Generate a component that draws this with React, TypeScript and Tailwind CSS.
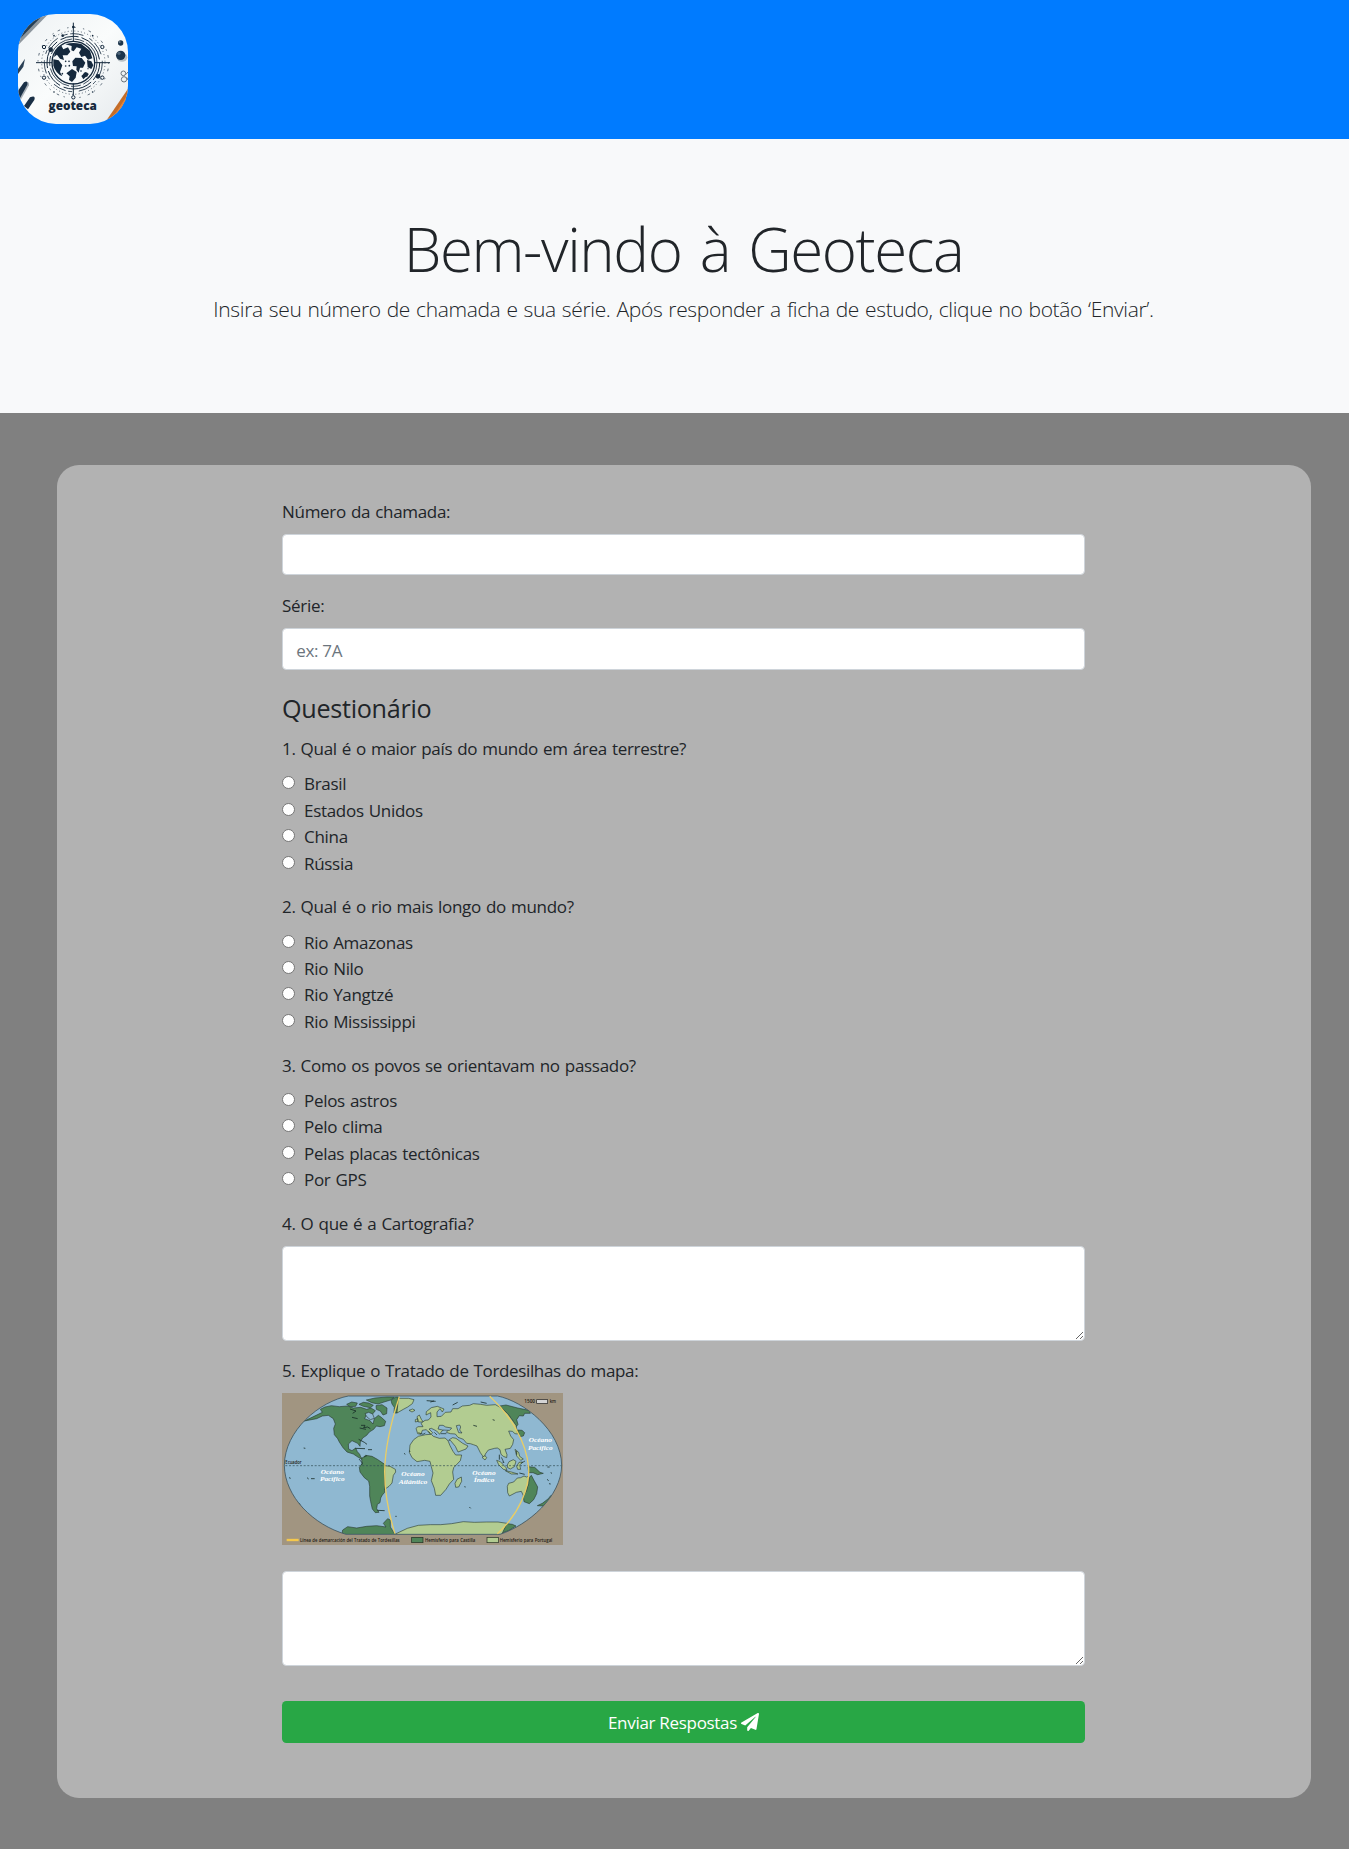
import React from "react";
import { FaPaperPlane } from "react-icons/fa";

const questions = [
  {
    title: "1. Qual é o maior país do mundo em área terrestre?",
    options: ["Brasil", "Estados Unidos", "China", "Rússia"],
  },
  {
    title: "2. Qual é o rio mais longo do mundo?",
    options: ["Rio Amazonas", "Rio Nilo", "Rio Yangtzé", "Rio Mississippi"],
  },
  {
    title: "3. Como os povos se orientavam no passado?",
    options: ["Pelos astros", "Pelo clima", "Pelas placas tectônicas", "Por GPS"],
  },
];

function Logo() {
  const ink = "#15293d";
  const nodes = [
    [132, 141],
    [307, 141],
    [132, 233],
    [307, 233],
    [220, 292],
  ];
  return (
    <svg viewBox="54 42 330 330" className="block size-[110px] rounded-[38px] tracking-normal">
      <defs>
        <linearGradient id="paper" x1="0" y1="0" x2="1" y2="1">
          <stop offset="0" stopColor="#eef2f4" />
          <stop offset="0.5" stopColor="#fafcfc" />
          <stop offset="1" stopColor="#e6eaed" />
        </linearGradient>
      </defs>
      <rect x="54" y="42" width="330" height="330" fill="url(#paper)" />
      <path d="M54 42H145L54 136Z" fill="#8d969d" />
      <path d="M54 42H132L54 122Z" fill="#253e54" />
      <path d="M54 206L75 176L70 200L54 222Z" fill="#2a4055" />
      <path d="M54 280L76 248Q88 242 87 256L62 300L54 308Z" fill="#a9b1b8" />
      <path d="M54 272L72 247Q84 240 82 254L60 294L54 298Z" fill="#1a3046" />
      <path d="M72 318L90 292Q108 284 103 300L84 328Z" fill="#1a3046" />
      <path d="M384 266L312 372H384Z" fill="#c46c28" />
      <path d="M384 282L326 372H384Z" fill="#e6863a" />
      <ellipse cx="366" cy="172" rx="16" ry="13" fill="#b9c0c5" />
      <circle cx="362" cy="166" r="14" fill="#1d354b" />
      <circle cx="357" cy="160" r="5" fill="#4d6377" />
      <circle cx="362" cy="129" r="8" fill="#1d354b" />
      <circle cx="359" cy="126" r="3" fill="#64788a" />
      <g fill="none" stroke="#6b757d" strokeWidth="3">
        <circle cx="370" cy="220" r="7" />
        <circle cx="372" cy="238" r="8" />
        <path d="M377 224L384 216M380 232L384 240" />
      </g>
      <g fill="none" stroke={ink}>
        <circle cx="220" cy="188" r="64" strokeWidth="4" />
        <circle cx="220" cy="188" r="71" strokeWidth="2.5" strokeDasharray="80 8 30 6" />
        <circle cx="220" cy="188" r="79" strokeWidth="3" strokeDasharray="56 9 88 12" />
        <circle cx="220" cy="188" r="87" strokeWidth="2.5" strokeDasharray="40 20 12 8" />
        <circle cx="220" cy="188" r="95" strokeWidth="2" strokeDasharray="3 7" />
        <circle cx="220" cy="188" r="106" strokeWidth="2" strokeDasharray="4 14 8 22" />
        <path d="M108 188H157M283 188H330M220 68V126M220 250V286" strokeWidth="3" />
        {nodes.map(([x, y]) => (
          <circle key={`${x}-${y}`} cx={x} cy={y} r="5" strokeWidth="3" fill="#f4f7f8" />
        ))}
      </g>
      <circle cx="220" cy="188" r="60" fill="#f7fafb" />
      <g fill={ink}>
        <path d="M162 171Q164 146 184 137L190 148L204 142L211 155L202 166L188 166L192 180L180 176L171 164Z" />
        <path d="M160 178L176 181L187 196L180 216L187 229Q167 219 160 197Z" />
        <path d="M196 133Q218 125 244 132L270 152L277 175L264 179L255 167L244 171L237 158L244 146L230 142L221 154L214 151L215 138Z" />
        <path d="M217 184L226 173L245 174L256 188L249 203L240 203L236 218L229 209L230 199L219 198Z" />
        <path d="M199 220L216 207L230 216L227 233L216 246L207 240L209 229Z" />
        <path d="M261 180L274 184L280 196L274 207L263 202Z" />
        <path d="M244 228L256 217L267 222L250 238Z" />
        <circle cx="152" cy="149" r="7" />
        <circle cx="294" cy="229" r="7" />
        <circle cx="257" cy="224" r="7" />
        <circle cx="220" cy="81" r="4" />
        <circle cx="188" cy="107" r="4" />
        <circle cx="162" cy="107" r="2.5" />
        <circle cx="278" cy="107" r="2.5" />
        <circle cx="162" cy="276" r="2.5" />
        <circle cx="278" cy="276" r="2.5" />
        <circle cx="197" cy="184" r="2.5" />
        <circle cx="207" cy="184" r="2.5" />
        <circle cx="197" cy="198" r="2.5" />
        <circle cx="208" cy="197" r="2.5" />
        <circle cx="187" cy="221" r="2.5" />
        <circle cx="243" cy="213" r="2.5" />
        <circle cx="264" cy="206" r="2" />
      </g>
      <text
        x="218"
        y="329"
        textAnchor="middle"
        textLength="145"
        lengthAdjust="spacingAndGlyphs"
        fontSize="36"
        fontWeight="800"
        fill={ink}
        className="font-['Open_Sans',sans-serif]"
      >
        geoteca
      </text>
    </svg>
  );
}

const oceans = [
  { x: 187, y: 281, top: "Océano", bottom: "Pacífico", w: 74 },
  { x: 429, y: 289, top: "Océano", bottom: "Atlántico", w: 86 },
  { x: 642, y: 284, top: "Océano", bottom: "Índico", w: 62 },
  { x: 811, y: 187, top: "Océano", bottom: "Pacífico", w: 74 },
];

function TordesillasMap() {
  const globe =
    "M235 48H683C760 64 874 150 875 256C874 350 775 435 690 463H228C130 435 44 350 43 256C44 150 150 64 235 48Z";
  return (
    <svg viewBox="36 39 843 456" className="block h-[152px] w-[281px] tracking-normal">
      <defs>
        <clipPath id="globe">
          <path d={globe} />
        </clipPath>
      </defs>
      <rect x="36" y="39" width="843" height="456" fill="#a19581" />
      <path d={globe} fill="#8fb8d1" />
      <g clipPath="url(#globe)" stroke="#26372f" strokeWidth="1.8" strokeLinejoin="round">
        <g fill="#4f8559">
          <path d="M103 123L126 112L157 97L151 88L165 81L184 77L208 80L232 78L250 84L272 82L290 88L303 84L316 92L306 104L289 104L284 116L300 122L309 132L313 116L325 106L334 112L347 124L343 137L330 140L319 138L311 148L298 156L290 166L278 174L271 186L270 199L263 190L246 182L235 192L236 207L246 212L257 204L262 215L269 223L273 233L284 236L279 240L265 232L250 222L231 216L219 203L208 186L203 176L193 164L191 145L196 132L190 116L175 106L157 108L140 116Z" />
          <path d="M230 73L245 66L262 69L257 79L240 80ZM267 73L280 67L296 69L310 76L301 83L280 79ZM289 60L315 54L351 51L373 51L362 60L342 66L324 72L305 68ZM318 77L336 74L351 84L350 101L339 105L331 93L319 88Z" />
          <path d="M363 61L377 51H385L381 99L372 99L373 82L366 72Z" />
          <path d="M275 236L287 226L306 229L322 238L344 253V337L337 345L332 354L330 368L322 373L320 386L327 397L316 398L307 387L302 365L299 348V319L296 303L283 293L270 276L268 262L276 251Z" />
          <path d="M689 78L708 75L743 84L777 91L781 100L764 100L760 108L748 107L740 119L744 133L739 140L728 121L713 101Z" />
          <path d="M743 150L756 151L764 158L760 168L749 170Z" />
          <path d="M774 260L794 262L810 277L820 280L803 284L789 278L776 278Z" />
          <path d="M779 292L784 286L792 301L803 321L800 341L791 359L778 371L762 365L760 349L770 331Z" />
          <path d="M817 370L835 356L842 347L848 352L839 362L819 378L802 377Z" />
          <path d="M218 450L233 440L260 444L290 439L320 437L348 441L340 430L353 416L361 420L361 441L374 461V475H214Z" />
          <path d="M711 431L727 433L738 438L716 452L684 463Z" />
        </g>
        <g fill="#b2cc91">
          <path d="M385 55L416 55L432 59L427 71L413 81L400 88L381 99Z" />
          <path d="M344 257L360 259L376 268L377 276L370 286L366 309L357 319L344 328Z" />
          <path d="M417 91L428 87L435 91L426 96Z" />
          <path d="M441 110L448 105L454 118L460 126L445 126ZM436 119L443 116L444 124L436 126Z" />
          <path d="M443 161L438 145L444 140H459L453 130L465 121L475 120L483 111L482 98L468 105L469 95L484 83L502 79L522 87L517 96L510 86L501 96L501 110L514 109L526 97L543 96L548 86L564 86L577 78L599 76L610 71L632 73L650 76L676 74L689 81L713 101L738 136L743 162L735 161L727 154L716 153L722 168L731 179L728 193L721 205L705 208L711 224L710 233L700 229L693 223L690 209L682 204L674 205L655 210L646 222L643 235L631 218L621 198L610 194L601 191L590 190L580 178L564 172L556 162L541 161L529 157L537 148L525 146L515 154L509 163L500 153L484 145L477 147L488 158L482 164L469 149L457 151L453 163Z" />
          <path d="M445 169L467 164L484 163L490 169L508 175L525 174L534 182L540 197L549 214L557 225L575 225L571 242L551 263L548 276L551 298L538 312L528 328L512 346L497 346L493 325L484 302L489 279L484 260L480 244L464 241L441 245L426 233L418 217L420 195L431 179Z" />
          <path d="M536 181L541 181L556 199L564 216L588 207L594 198L578 190L558 175L548 173L541 177Z" />
          <path d="M574 291L575 304L566 321L557 322L555 310L561 298Z" />
          <path d="M636 232L645 227L650 233L645 240Z" />
          <path d="M680 241L691 245L708 263L711 271L700 268L686 254ZM706 272L724 276L744 282L724 282ZM712 255L717 245L730 239L738 244L733 260L721 267L713 263ZM740 259L747 247L758 246L749 255L752 268L743 268ZM735 208L746 217L749 229L760 237L752 241L740 228Z" />
          <path d="M712 319L716 310L731 306L742 294L752 293L762 288L770 291L776 288V311L761 349L754 334L739 337L718 348L713 338Z" />
          <path d="M374 463L393 454L412 445L445 436L481 434L512 434L545 431L580 425L613 427L650 426L684 426L711 430L690 474H374Z" />
        </g>
        <g fill="#8fb8d1">
          <path d="M504 147L508 136L519 136L527 141L545 144L539 151L517 150Z" />
          <path d="M559 137L569 135L572 141L569 150L576 159L566 158L562 147Z" />
          <path d="M285 101L296 97L308 102L313 115L301 119L291 111Z" />
        </g>
        <g fill="none" stroke="#172b27" strokeWidth="2.4">
          <path d="M240 87L258 93L248 100M246 112L263 116M273 136H285L281 143L293 141L301 146M269 144L288 148M266 178L283 187L291 193M256 205L285 206M294 209H306M470 62L497 64M481 66L492 63M548 75L563 67M632 66L650 70M668 119L674 121M610 136L621 139M740 213V224M688 224V239M748 279L764 283M831 298L836 302M837 311L842 312M322 391L344 392M101 204L106 205M57 293L62 295M111 293L116 297M123 296H134M376 409H380M598 381L602 385M87 370L91 373M402 220L406 223M417 213L421 214M583 320L587 321M832 261H839M842 278L846 280" />
          <path d="M267 237L277 249L275 255M282 231L291 227M445 158L459 163L466 159M475 154L482 161M493 157L501 165M513 161L529 161M694 232L702 248L697 246M753 250L765 243" strokeWidth="2" />
        </g>
      </g>
      <path d={globe} fill="none" stroke="#3f5660" strokeWidth="2.5" />
      <path d="M46 257H875" stroke="#2d4a50" strokeWidth="2" strokeDasharray="6 5" />
      <path
        d="M388 50C370 105 345 190 344 275C344 350 362 420 375 461M659 49C715 100 770 180 776 265C779 320 750 400 682 461"
        fill="none"
        stroke="#e9cd65"
        strokeWidth="4"
      />
      <g
        fill="#fff"
        fontSize="21"
        fontStyle="italic"
        fontWeight="700"
        textAnchor="middle"
        className="font-['Liberation_Serif',serif]"
      >
        {oceans.map((o) => (
          <React.Fragment key={`${o.x}-${o.y}`}>
            <text x={o.x} y={o.y} textLength="70" lengthAdjust="spacingAndGlyphs">
              {o.top}
            </text>
            <text x={o.x} y={o.y + 22} textLength={o.w} lengthAdjust="spacingAndGlyphs">
              {o.bottom}
            </text>
          </React.Fragment>
        ))}
      </g>
      <path d="M50 480H86" stroke="#f5c84c" strokeWidth="7" />
      <rect x="425" y="472" width="34" height="16" fill="#4f8559" stroke="#222b20" strokeWidth="2" />
      <rect x="651" y="472" width="34" height="16" fill="#b2cc91" stroke="#222b20" strokeWidth="2" />
      <rect x="800" y="59" width="33" height="11" fill="#d4d4d4" stroke="#222" strokeWidth="2" />
      <g fill="#1d1a15" fontSize="14" fontWeight="600" className="font-['Open_Sans',sans-serif]">
        <text x="46" y="253" textLength="49" lengthAdjust="spacingAndGlyphs">Ecuador</text>
        <text x="763" y="70" textLength="32" lengthAdjust="spacingAndGlyphs">1500</text>
        <text x="839" y="70" textLength="19" lengthAdjust="spacingAndGlyphs">km</text>
        <text x="90" y="486" textLength="299" lengthAdjust="spacingAndGlyphs">
          Línea de demarcación del Tratado de Tordesillas
        </text>
        <text x="465" y="486" textLength="151" lengthAdjust="spacingAndGlyphs">Hemisferio para Castilla</text>
        <text x="689" y="486" textLength="158" lengthAdjust="spacingAndGlyphs">Hemisferio para Portugal</text>
      </g>
    </svg>
  );
}

const labelClass = "mb-[8.8px] block h-[26.4px] leading-[26.4px]";
const fieldClass =
  "block w-full rounded-[4.4px] border border-[#ced4da] bg-white px-[13.2px] outline-none placeholder:text-[#6c757d]";

export default function App() {
  return (
    <div className="flex h-[1849px] w-full flex-col overflow-hidden bg-[#808080] font-['Open_Sans',sans-serif] text-[17px] font-[370] tracking-[-0.3px] text-[#212529] [word-spacing:0.9px]">
      <header className="flex h-[139px] shrink-0 items-start bg-[#007bff] pt-[14px] pl-[18px]">
        <Logo />
      </header>

      <section className="flex h-[274px] w-[1367px] shrink-0 flex-col items-center bg-[#f8f9fa] pt-[73px]">
        <h1 className="text-[60px] leading-[74px] font-light tracking-[-1.4px] whitespace-nowrap [word-spacing:4px]">
          Bem-vindo à Geoteca
        </h1>
        <p className="mt-[7px] text-[21px] leading-[33px] font-light tracking-[-0.35px] whitespace-nowrap">
          Insira seu número de chamada e sua série. Após responder a ficha de estudo, clique no botão ‘Enviar’.
        </p>
      </section>

      <main className="mt-[52px] ml-[57px] h-[1333px] w-[1254px] shrink-0 rounded-[22px] bg-[#b2b2b2] pt-[33.6px] pl-[225px]">
        <form className="w-[803px]">
          <div className="mb-[17.6px]">
            <label className={labelClass}>Número da chamada:</label>
            <input className={`${fieldClass} h-[41.6px]`} />
          </div>
          <div className="mb-[17.6px]">
            <label className={labelClass}>Série:</label>
            <input className={`${fieldClass} h-[41.8px] pt-[2px]`} placeholder="ex: 7A" />
          </div>

          <h2 className="mt-[22px] mb-[12.2px] text-[25.2px] leading-[32px] tracking-[-0.3px]">Questionário</h2>

          {questions.map((q, qi) => (
            <fieldset key={q.title} className="mb-[17.6px]">
              <legend className={labelClass}>{q.title}</legend>
              {q.options.map((o) => (
                <label key={o} className="flex h-[26.4px] items-start leading-[26.4px]">
                  <input
                    type="radio"
                    name={`q${qi}`}
                    className="mt-[5px] mr-[9px] size-[13px] shrink-0 appearance-none rounded-full border border-[#767676] bg-white"
                  />
                  {o}
                </label>
              ))}
            </fieldset>
          ))}

          <div className="mb-[17.6px]">
            <label className="mb-[8px] block h-[26.4px] leading-[26.4px]">4. O que é a Cartografia?</label>
            <textarea className={`${fieldClass} h-[95px] resize-y`} />
          </div>
          <div>
            <label className="mb-[8px] block h-[26.4px] leading-[26.4px] tracking-[-0.36px]">
              5. Explique o Tratado de Tordesilhas do mapa:
            </label>
            <TordesillasMap />
            <textarea className={`${fieldClass} mt-[26.4px] h-[95px] resize-y`} />
          </div>

          <button
            type="button"
            className="mt-[34.8px] flex h-[42px] w-full items-center justify-center gap-[4px] rounded-[4.4px] bg-[#28a745] pt-[2px] text-white"
          >
            Enviar Respostas
            <FaPaperPlane className="mb-[2px] size-[18px]" />
          </button>
        </form>
      </main>
    </div>
  );
}
